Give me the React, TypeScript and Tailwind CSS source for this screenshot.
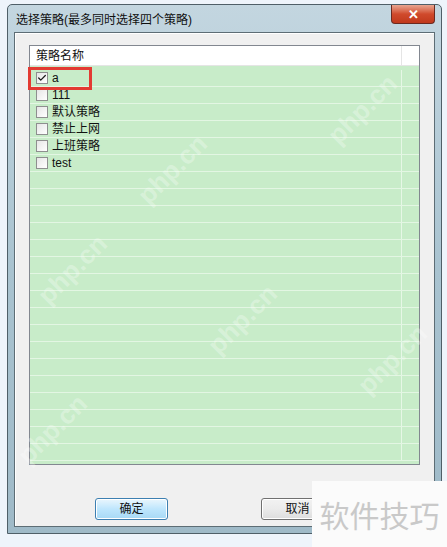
import { Check } from "lucide-react";

const font = { fontFamily: '"Liberation Sans", "Noto Sans CJK SC", sans-serif' };

const policies = [
  { name: "a", checked: true },
  { name: "111", checked: false },
  { name: "默认策略", checked: false },
  { name: "禁止上网", checked: false },
  { name: "上班策略", checked: false },
  { name: "test", checked: false },
];

const TOTAL_ROWS = 23;

function CheckBox({ checked }: { checked: boolean }) {
  return (
    <span className="flex h-[12px] w-[12px] shrink-0 items-center justify-center border border-[#8e8f8f] bg-gradient-to-br from-[#e6e6e6] to-[#ffffff]">
      {checked && <Check size={10} strokeWidth={3} className="text-[#1b1b1b]" />}
    </span>
  );
}

function PolicyRow({ name, checked }: { name?: string; checked?: boolean }) {
  return (
    <div className="flex h-[17px] border-b border-[#e3f6e3]">
      <div className="flex flex-1 items-center gap-[4px] pl-[6px] text-[12px] text-[#111]">
        {name !== undefined && (
          <>
            <CheckBox checked={!!checked} />
            <span className="leading-none">{name}</span>
          </>
        )}
      </div>
      <div className="w-[18px] border-l border-[#e6f7e6]" />
    </div>
  );
}

function Watermark({ className }: { className: string }) {
  return (
    <span
      className={`pointer-events-none absolute -rotate-45 text-[26px] font-bold text-white/30 ${className}`}
      style={{ fontFamily: '"Liberation Sans", sans-serif' }}
    >
      php.cn
    </span>
  );
}

export default function App() {
  const rows = Array.from({ length: TOTAL_ROWS }, (_, i) => policies[i]);

  return (
    <div className="relative h-[547px] w-[447px] overflow-hidden bg-[#eef4fb]" style={font}>
      {/* dialog window */}
      <div className="ml-[7px] mt-[4px] flex h-[530px] w-[435px] flex-col rounded-t-[5px] border border-[#4f5f68] bg-gradient-to-b from-[#c3d6e0] via-[#a9c3d0] to-[#9fbac8] px-[6px] pb-[6px]">
        {/* title bar */}
        <div className="flex h-[27px] items-start">
          <span className="mt-[6px] pl-[2px] text-[12px] text-[#101010]">选择策略(最多同时选择四个策略)</span>
          <button className="ml-auto flex h-[19px] w-[44px] items-center justify-center rounded-b-[4px] border border-t-0 border-[#6b2a20] bg-gradient-to-b from-[#e8a590] via-[#d04a2c] to-[#c0391c] text-[13px] font-bold leading-none text-white">
            ✕
          </button>
        </div>

        {/* client area */}
        <div className="flex flex-1 flex-col border border-[#5d6d75] bg-[#f0f0f0] shadow-[inset_1px_1px_0_#ffffff]">
          <div className="px-[14px] pt-[12px]">
            <div className="relative flex h-[420px] flex-col border border-[#828790] bg-[#c8ecc9]">
              {/* header */}
              <div className="flex h-[20px] shrink-0 border-b border-[#e5e5e5] bg-white">
                <div className="flex flex-1 items-center pl-[6px] text-[12px] text-[#111]">策略名称</div>
                <div className="w-[18px] border-l border-[#e5e5e5]" />
              </div>
              <div className="flex-1 overflow-hidden pt-[4px]">
                {rows.map((p, i) => (
                  <PolicyRow key={i} name={p?.name} checked={p?.checked} />
                ))}
              </div>
              {/* highlight around the checked row */}
              <div className="absolute left-[-2px] top-[21px] h-[23px] w-[64px] border-[3px] border-[#e33a32]" />
            </div>
          </div>

          {/* buttons */}
          <div className="mt-[33px] flex pl-[80px]">
            <button className="h-[22px] w-[73px] rounded-[3px] border border-[#3c7fb1] bg-gradient-to-b from-[#eaf6fd] via-[#bee6fd] to-[#a7d9f5] text-[12px] text-[#111] shadow-[inset_0_0_0_1px_#ffffff]">
              确定
            </button>
            <button className="ml-[93px] h-[22px] w-[73px] rounded-[3px] border border-[#707070] bg-gradient-to-b from-[#f2f2f2] via-[#ebebeb] to-[#dddddd] text-[12px] text-[#111] shadow-[inset_0_0_0_1px_#ffffff]">
              取消
            </button>
          </div>
        </div>
      </div>

      <Watermark className="left-[130px] top-[150px]" />
      <Watermark className="left-[320px] top-[90px]" />
      <Watermark className="left-[30px] top-[250px]" />
      <Watermark className="left-[200px] top-[300px]" />
      <Watermark className="left-[350px] top-[340px]" />
      <Watermark className="left-[10px] top-[410px]" />

      {/* site badge in the corner */}
      <div className="absolute bottom-0 right-0 flex h-[66px] w-[135px] items-center justify-center bg-[#fbfbfb] text-[30px] text-[#c9c9c9]" style={{ fontFamily: '"Noto Sans CJK SC", sans-serif' }}>
        软件技巧
      </div>
    </div>
  );
}
